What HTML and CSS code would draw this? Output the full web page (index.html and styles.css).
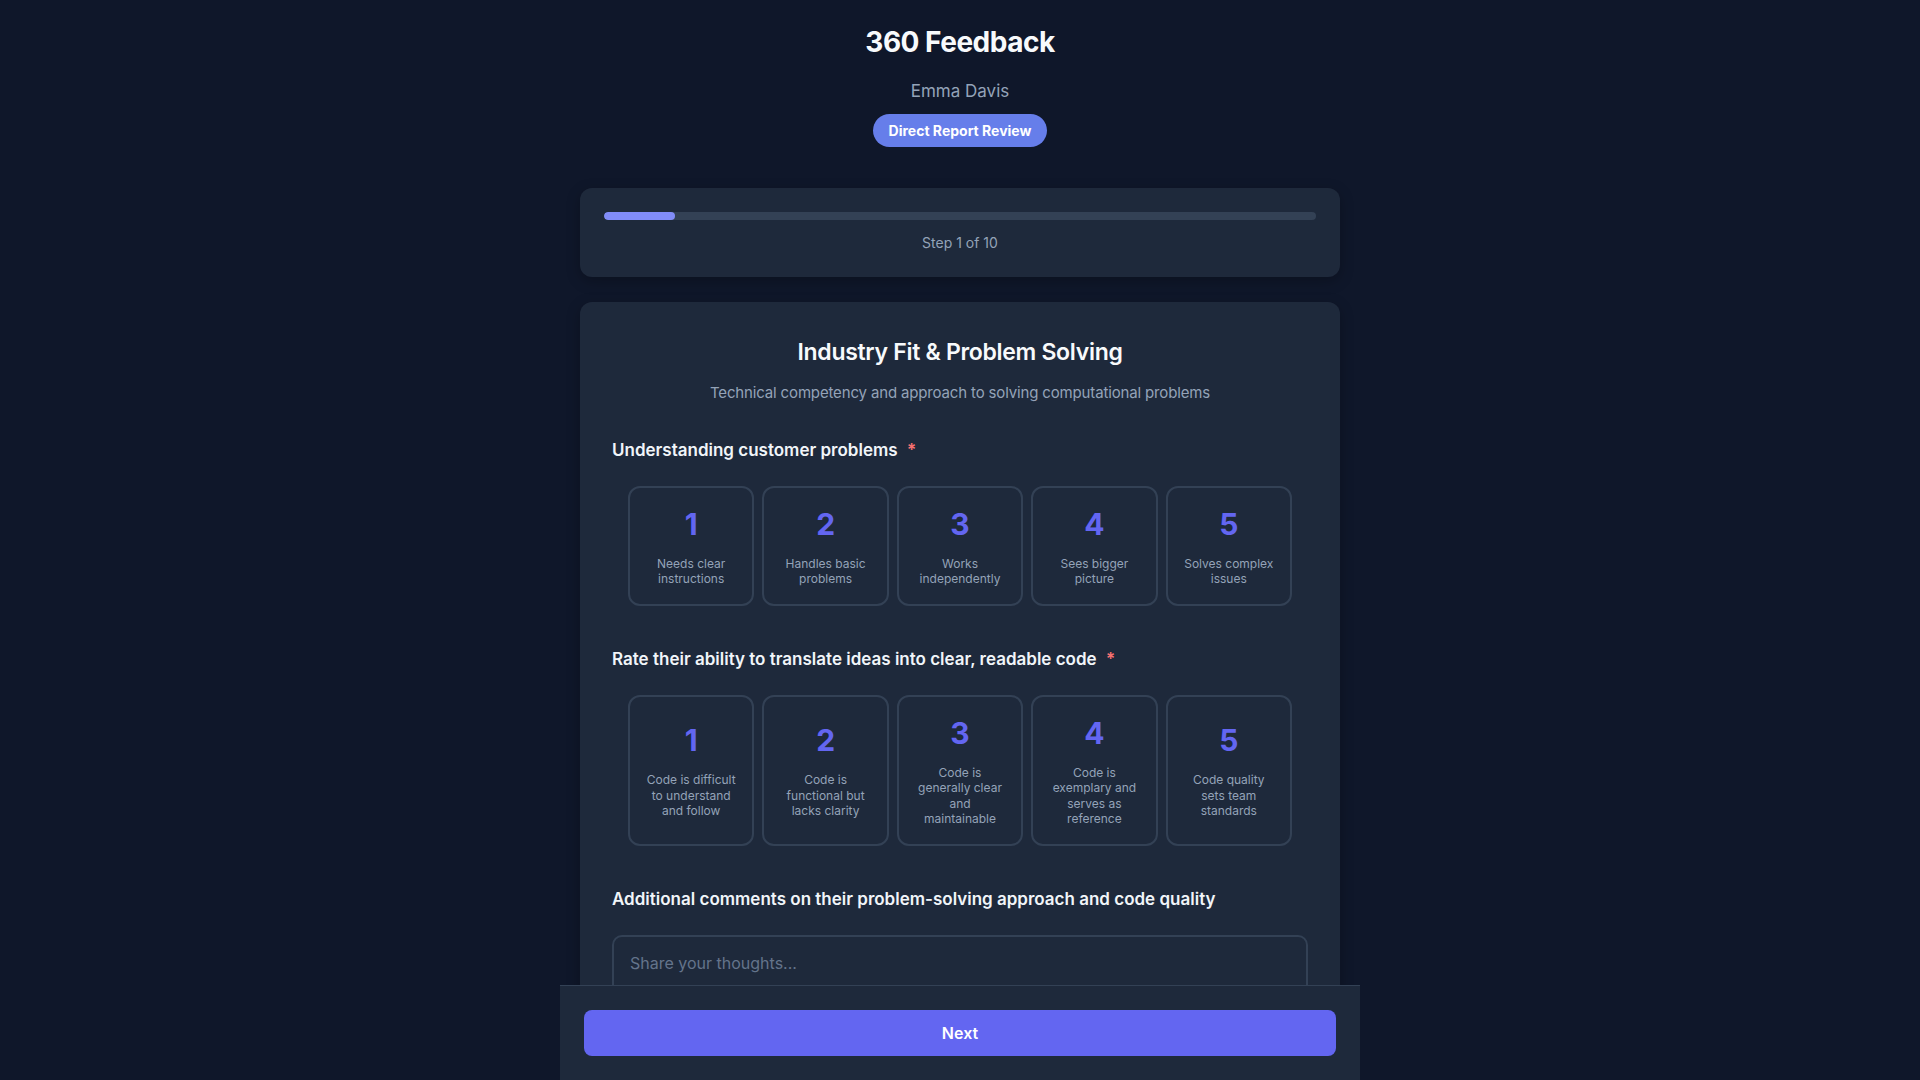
FILE: index.html
```html
<!DOCTYPE html>
<html lang="en">
<head>
  <meta charset="UTF-8">
  <title>360 Feedback</title>
  <link rel="stylesheet" href="styles.css">
</head>
<body>

<div class="page">
  <div class="head">
    <h1>360 Feedback</h1>
    <p class="name">Emma Davis</p>
    <span class="badge">Direct Report Review</span>
  </div>

  <div class="progress-card">
    <div class="track"><div class="fill" style="width: 10%"></div></div>
    <p class="step">Step 1 of 10</p>
  </div>

  <div class="form-card">
    <div class="section-head">
      <h2>Industry Fit &amp; Problem Solving</h2>
      <p class="desc">Technical competency and approach to solving computational problems</p>
    </div>

    <div class="question">
      <label class="q-label">Understanding customer problems <span class="req">*</span></label>
      <div class="ratings">
        <div class="rate"><span class="num">1</span><span class="txt">Needs clear instructions</span></div>
        <div class="rate"><span class="num">2</span><span class="txt">Handles basic problems</span></div>
        <div class="rate"><span class="num">3</span><span class="txt">Works independently</span></div>
        <div class="rate"><span class="num">4</span><span class="txt">Sees bigger picture</span></div>
        <div class="rate"><span class="num">5</span><span class="txt">Solves complex issues</span></div>
      </div>
    </div>

    <div class="question">
      <label class="q-label">Rate their ability to translate ideas into clear, readable code <span class="req">*</span></label>
      <div class="ratings">
        <div class="rate"><span class="num">1</span><span class="txt">Code is difficult to understand and follow</span></div>
        <div class="rate"><span class="num">2</span><span class="txt">Code is functional but lacks clarity</span></div>
        <div class="rate"><span class="num">3</span><span class="txt">Code is generally clear and maintainable</span></div>
        <div class="rate"><span class="num">4</span><span class="txt">Code is exemplary and serves as reference</span></div>
        <div class="rate"><span class="num">5</span><span class="txt">Code quality sets team standards</span></div>
      </div>
    </div>

    <div class="question">
      <label class="q-label">Additional comments on their problem-solving approach and code quality</label>
      <div class="comment-wrap">
        <textarea class="comment" rows="4" placeholder="Share your thoughts..."></textarea>
      </div>
    </div>
  </div>
</div>

<footer class="footer">
  <button class="next">Next</button>
</footer>

</body>
</html>
```

FILE: styles.css
```css
body {
  margin: 0;
  background-color: #0f172a;
  color: #f1f5f9;
  font-family: Inter, "Noto Sans", sans-serif;
}
.page {
  max-width: 760px;
  margin: 0 auto;
  padding: 24px 20px 140px;
}
.head {
  display: flex;
  flex-direction: column;
  align-items: center;
}
.head h1 {
  margin: 0;
  font-size: 28px;
  line-height: 36px;
  font-weight: 700;
  letter-spacing: -0.5px;
  color: #f8fafc;
}
.name {
  margin: 17px 0 0;
  font-size: 17px;
  line-height: 28px;
  color: #94a3b8;
}
.badge {
  margin-top: 9px;
  padding: 6px 16px;
  border-radius: 999px;
  background-color: #667eea;
  color: #fff;
  font-size: 14px;
  line-height: 21px;
  font-weight: 700;
}
.progress-card {
  margin-top: 41px;
  padding: 24px;
  background-color: #1e293b;
  border-radius: 12px;
  box-shadow: 0 4px 14px rgba(0, 0, 0, 0.25);
}
.track {
  height: 8px;
  border-radius: 4px;
  background-color: #334155;
  overflow: hidden;
}
.fill {
  height: 100%;
  border-radius: 4px;
  background-color: #818cf8;
}
.step {
  margin: 13px 0 0;
  text-align: center;
  font-size: 14px;
  line-height: 20px;
  color: #94a3b8;
}
.form-card {
  margin-top: 25px;
  padding: 32px;
  background-color: #1e293b;
  border-radius: 12px;
  box-shadow: 0 4px 14px rgba(0, 0, 0, 0.25);
}
.section-head {
  text-align: center;
  margin-bottom: 31px;
}
.section-head h2 {
  margin: 0;
  font-size: 23px;
  line-height: 36px;
  font-weight: 600;
  letter-spacing: -0.3px;
  color: #f8fafc;
}
.desc {
  margin: 11px 0 0;
  font-size: 15px;
  line-height: 24px;
  letter-spacing: -0.15px;
  color: #94a3b8;
}
.question {
  margin-bottom: 31px;
}
.q-label {
  display: block;
  margin-bottom: 14px;
  font-size: 17px;
  line-height: 28px;
  font-weight: 600;
  color: #f1f5f9;
}
.req {
  margin-left: 5px;
  color: #f87171;
}
.ratings {
  display: grid;
  grid-template-columns: repeat(5, 1fr);
  gap: 8px;
  padding: 8px 16px;
}
.rate {
  display: flex;
  flex-direction: column;
  align-items: center;
  justify-content: center;
  padding: 17.5px 15.5px;
  border: 2px solid #334155;
  border-radius: 12px;
  text-align: center;
}
.num {
  font-size: 30px;
  line-height: 36px;
  font-weight: 700;
  color: #6366f1;
  margin-bottom: 14px;
}
.txt {
  font-size: 12px;
  line-height: 15.5px;
  color: #94a3b8;
}
.comment-wrap {
  padding-top: 8px;
}
.comment {
  display: block;
  box-sizing: border-box;
  width: 100%;
  height: 130px;
  padding: 14px 16px;
  border: 2px solid #334155;
  border-radius: 10px;
  background-color: #1e293b;
  color: #f1f5f9;
  font-family: inherit;
  font-size: 16px;
  line-height: 24px;
  resize: none;
}
.comment::placeholder {
  color: #64748b;
}
.footer {
  position: fixed;
  bottom: 0;
  left: 50%;
  transform: translateX(-50%);
  box-sizing: border-box;
  width: 800px;
  padding: 24px;
  background-color: #1e293b;
  border-top: 1px solid #334155;
}
.next {
  display: block;
  width: 100%;
  padding: 12px;
  border: none;
  border-radius: 8px;
  background-color: #6366f1;
  color: #fff;
  font-family: inherit;
  font-size: 16px;
  line-height: 22px;
  font-weight: 600;
  cursor: pointer;
}
```
